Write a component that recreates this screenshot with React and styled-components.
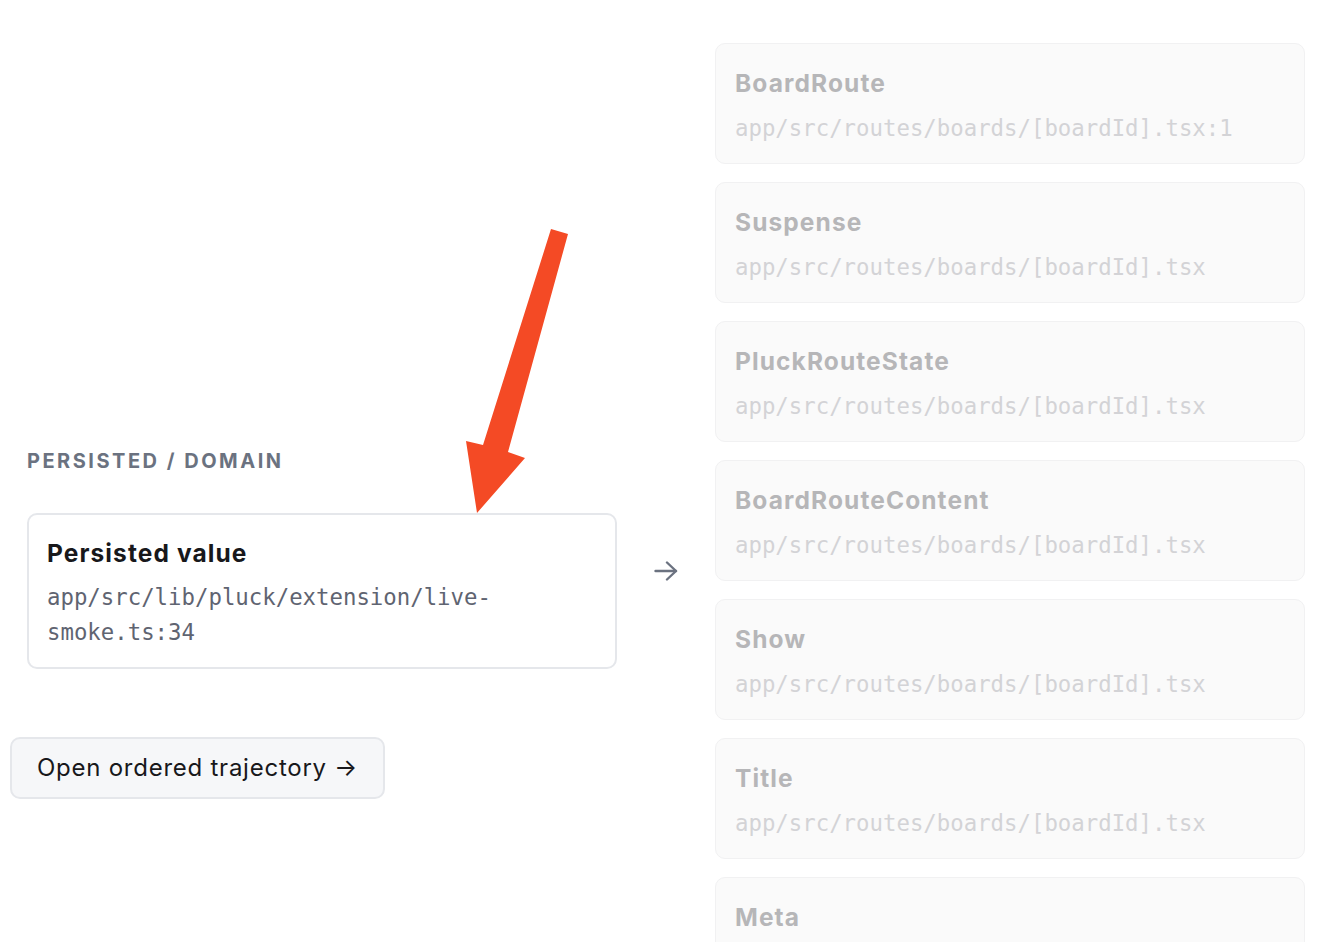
import React from "react";
import styled, { createGlobalStyle } from "styled-components";

const Global = createGlobalStyle`
  html, body { margin: 0; padding: 0; overflow: hidden; background: #ffffff; }
  body { font-family: Inter, "Noto Sans", "Liberation Sans", sans-serif; color: #111827; }
  * { box-sizing: border-box; }
`;

const Page = styled.div`
  position: relative;
  width: 1324px;
  height: 942px;
  overflow: hidden;
  padding-left: 10px;
`;

const Board = styled.div`
  display: grid;
  grid-template-columns: 705px 590px;
  align-items: center;
  margin-top: -21px;
`;

const LeftColumn = styled.div`
  display: flex;
  flex-direction: column;
  align-items: flex-start;
  margin-bottom: 8px;
`;

const Lane = styled.section`
  display: flex;
  flex-direction: column;
  gap: 40px;
  padding-left: 17px;
  width: 100%;
`;

const LaneLabel = styled.div`
  font-size: 20px;
  line-height: 24px;
  font-weight: 700;
  letter-spacing: 2.5px;
  text-transform: uppercase;
  color: #6b7280;
  white-space: nowrap;
`;

const CardRow = styled.div`
  display: flex;
  align-items: flex-start;
`;

const Connector = styled.div`
  flex: 1;
  display: flex;
  justify-content: center;
  padding-top: 48px;
  color: #6b7280;
`;

const Card = styled.div`
  width: 590px;
  border-radius: 10px;
  border: ${(p) => (p.$faded ? "1px solid #f1f1f2" : "2px solid #e5e7eb")};
  background: ${(p) => (p.$faded ? "#fafafa" : "#ffffff")};
  padding: ${(p) => (p.$faded ? "23px 19px 17px" : "22px 18px 17px")};
`;

const CardTitle = styled.div`
  font-size: 24.5px;
  line-height: 32px;
  font-weight: 700;
  letter-spacing: 1.1px;
  margin-bottom: ${(p) => (p.$faded ? "12px" : "11px")};
  color: ${(p) => (p.$faded ? "#b6b6b8" : "#18181b")};
`;

const CardPath = styled.div`
  font-family: "DejaVu Sans Mono", "Liberation Mono", monospace;
  font-size: 22.35px;
  line-height: 35px;
  color: ${(p) => (p.$faded ? "#d3d3d6" : "#5f6471")};
  word-break: break-word;
`;

const OpenButton = styled.button`
  margin-top: 68px;
  height: 62px;
  padding: 0 25px;
  border-radius: 10px;
  border: 2px solid #e5e7eb;
  background: #f6f7f9;
  font-family: Inter, "Noto Sans", "Liberation Sans", sans-serif;
  font-size: 24px;
  letter-spacing: 0.75px;
  color: #18181b;
  cursor: pointer;
`;

const RightColumn = styled.div`
  display: flex;
  flex-direction: column;
`;

const CardList = styled.div`
  display: flex;
  flex-direction: column;
  gap: 18px;
  margin-top: 40px;
`;

const Pointer = styled.svg`
  position: absolute;
  left: 460px;
  top: 222px;
  pointer-events: none;
`;

const Arrow = () => (
  <svg width="24" height="20" viewBox="0 0 24 20" fill="none" stroke="currentColor" strokeWidth="2.4" strokeLinecap="round" strokeLinejoin="round">
    <path d="M1.5 10H22" />
    <path d="M13 1.5L22 10L13 18.5" />
  </svg>
);

const routes = [
  ["BoardRoute", "app/src/routes/boards/[boardId].tsx:1"],
  ["Suspense", "app/src/routes/boards/[boardId].tsx"],
  ["PluckRouteState", "app/src/routes/boards/[boardId].tsx"],
  ["BoardRouteContent", "app/src/routes/boards/[boardId].tsx"],
  ["Show", "app/src/routes/boards/[boardId].tsx"],
  ["Title", "app/src/routes/boards/[boardId].tsx"],
  ["Meta", "app/src/routes/boards/[boardId].tsx"],
  ["BoardHeader", "app/src/routes/boards/[boardId].tsx"],
  ["BoardCanvas", "app/src/routes/boards/[boardId].tsx"],
];

export default function App() {
  return (
    <Page>
      <Global />
      <Board>
        <LeftColumn>
          <Lane>
            <LaneLabel>Persisted / Domain</LaneLabel>
            <CardRow>
              <Card>
                <CardTitle>Persisted value</CardTitle>
                <CardPath>app/src/lib/pluck/extension/live-smoke.ts:34</CardPath>
              </Card>
              <Connector>
                <Arrow />
              </Connector>
            </CardRow>
          </Lane>
          <OpenButton>Open ordered trajectory →</OpenButton>
        </LeftColumn>
        <RightColumn>
          <LaneLabel>Rendered / UI</LaneLabel>
          <CardList>
            {routes.map(([name, path]) => (
              <Card key={name} $faded>
                <CardTitle $faded>{name}</CardTitle>
                <CardPath $faded>{path}</CardPath>
              </Card>
            ))}
          </CardList>
        </RightColumn>
      </Board>
      <Pointer width="115" height="300" viewBox="460 222 115 300">
        <polygon points="551,229 568,234 508,452 525,458 477,513 466,441 483,445" fill="#f44a25" />
      </Pointer>
    </Page>
  );
}
